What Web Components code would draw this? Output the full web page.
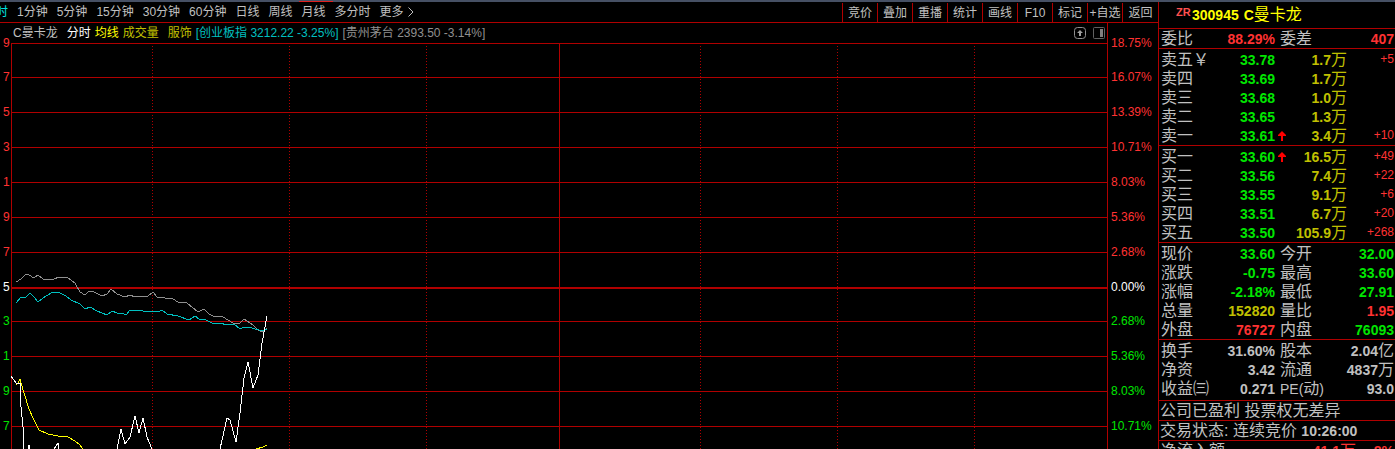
<!DOCTYPE html>
<html lang="zh-CN">
<head>
<meta charset="utf-8">
<title>C曼卡龙 300945 分时</title>
<style>
html, body { margin: 0; height: 100%; }
body {
  background: #000; color: #c0c0c0; overflow: hidden;
  font: 12px/20px "Liberation Sans", "Noto Sans CJK SC", sans-serif;
  --line: #b00000; --up: #ff3232; --down: #00e600; --volume: #c0c000; --text: #c0c0c0;
}
</style>
</head>
<body>
<stock-terminal>
  <menu-bar slot="bar">
    <menu-item active>时</menu-item>
    <menu-item>1分钟</menu-item><menu-item>5分钟</menu-item><menu-item>15分钟</menu-item>
    <menu-item>30分钟</menu-item><menu-item>60分钟</menu-item><menu-item>日线</menu-item>
    <menu-item>周线</menu-item><menu-item>月线</menu-item><menu-item>多分时</menu-item>
    <menu-item more>更多</menu-item>
    <tool-button slot="tools">竞价</tool-button><tool-button slot="tools">叠加</tool-button>
    <tool-button slot="tools">重播</tool-button><tool-button slot="tools">统计</tool-button>
    <tool-button slot="tools">画线</tool-button><tool-button slot="tools">F10</tool-button>
    <tool-button slot="tools">标记</tool-button><tool-button slot="tools">+自选</tool-button>
    <tool-button slot="tools">返回</tool-button>
  </menu-bar>
  <price-axis slot="left" labels="9 7 5 3 1 9 7 5 3 1 9 7" align="right"></price-axis>
  <chart-legend slot="legend"></chart-legend>
  <intraday-chart slot="chart"></intraday-chart>
  <price-axis slot="right" framed labels="18.75% 16.07% 13.39% 10.71% 8.03% 5.36% 2.68% 0.00% 2.68% 5.36% 8.03% 10.71%"></price-axis>
  <quote-panel slot="quote">
    <quote-title mark="ZR" code="300945"><b>C</b>曼卡龙</quote-title>
    <quote-stats rows="委比|88.29%|up|委差|407|up"></quote-stats>
    <order-book rows="卖五￥|33.78||1.7|+5;卖四|33.69||1.7|;卖三|33.68||1.0|;卖二|33.65||1.3|;卖一|33.61|y|3.4|+10"></order-book>
    <order-book rows="买一|33.60|y|16.5|+49;买二|33.56||7.4|+22;买三|33.55||9.1|+6;买四|33.51||6.7|+20;买五|33.50||105.9|+268"></order-book>
    <quote-stats spaced rows="现价|33.60|down|今开|32.00|down;涨跌|-0.75|down|最高|33.60|down;涨幅|-2.18%|down|最低|27.91|down;总量|152820|volume|量比|1.95|up;外盘|76727|up|内盘|76093|down"></quote-stats>
    <quote-stats spaced loose rows="换手|31.60%|text|股本|2.04亿|text;净资|3.42|text|流通|4837万|text;收益㈢|0.271|text|PE(动)|93.0|text"></quote-stats>
    <quote-note>公司已盈利 投票权无差异</quote-note>
    <quote-note>交易状态: 连续竞价 <b>10:26:00</b></quote-note>
    <quote-flow></quote-flow>
  </quote-panel>
</stock-terminal>

<script>
function define(name, css, html) {
  customElements.define(name, class extends HTMLElement {
    constructor() {
      super();
      this.attachShadow({ mode: "open" }).innerHTML =
        `<style>:host,*{box-sizing:border-box}${css}</style>` +
        (typeof html === "function" ? html(this) : html);
    }
  });
}

// Numbers and latin letters are bold; CJK units and names are not.
const boldLatin = s => s.replace(/[-\d.%A-Z()]+/g, "<b>$&</b>");

define("stock-terminal", `
  :host { display: grid; grid-template: 2px minmax(0,1fr) / minmax(0,1fr) 237px; height: 100vh; overflow: hidden; }
  .frame { grid-column: 1 / 3; background: #465064; display: flex; align-items: flex-end; padding-left: 299px; }
  .frame i { width: 34px; height: 1px; background: #e02020; }
  .work { display: flex; flex-direction: column; min-width: 0; }
  .plot { flex: 1; min-height: 0; display: grid; grid-template-columns: 11px minmax(0,1fr) 51px; }
  .middle { min-width: 0; overflow: hidden; }
`, `
  <div class="frame"><i></i></div>
  <main class="work">
    <slot name="bar"></slot>
    <div class="plot">
      <slot name="left"></slot>
      <div class="middle"><slot name="legend"></slot><slot name="chart"></slot></div>
      <slot name="right"></slot>
    </div>
  </main>
  <slot name="quote"></slot>
`);

define("menu-bar", `
  :host { display: flex; justify-content: space-between; height: 21px; border-bottom: 1px solid var(--line); }
  nav { display: flex; gap: 9px; overflow: hidden; padding-left: 8px; }
  .tools { display: grid; grid-template-columns: repeat(8, 35px) 36px; padding-top: 1px; }
`, `<nav><slot></slot></nav><div class="tools"><slot name="tools"></slot></div>`);

const bareButton = `button { all: unset; box-sizing: border-box; font: inherit; color: inherit; white-space: nowrap; cursor: pointer; }`;

define("menu-item", `
  :host { display: block; line-height: 20px; }
  :host([active]) { color: #00e0e0; width: 0; display: flex; justify-content: flex-end; }
  ${bareButton}
  button { display: flex; align-items: center; gap: 4px; }
`, el => `<button type="button"><slot></slot>${el.hasAttribute("more")
  ? '<svg width="6" height="10" viewBox="0 0 6 10" fill="none" stroke="#c0c0c0"><path d="M.5 .5 5 5 .5 9.5"/></svg>' : ""}</button>`);

define("tool-button", `
  :host { display: block; border-left: 1px solid var(--line); }
  ${bareButton}
  button { display: block; width: 100%; text-align: center; line-height: 20px; }
`, `<button type="button"><slot></slot></button>`);

define("chart-legend", `
  :host { display: flex; align-items: center; gap: 4px; height: 20px; padding: 0 2px; white-space: nowrap; }
  .apart { margin-left: 5px; }
  .icons { margin-left: auto; display: flex; gap: 7px; }
  ${bareButton}
  button, svg { display: block; }
`, `
  <span>C曼卡龙</span>
  <span class="apart" style="color:#fff">分时</span>
  <span style="color:#ff0">均线</span>
  <span style="color:#c0c000">成交量</span>
  <span class="apart" style="color:#c0c000">服饰</span>
  <span style="color:#00c0c0">[创业板指 3212.22 -3.25%]</span>
  <span style="color:#909090">[贵州茅台 2393.50 -3.14%]</span>
  <span class="icons">
    <button type="button" aria-label="上移"><svg width="12" height="12" viewBox="0 0 12 12"><rect x=".5" y=".5" width="11" height="11" rx="3" fill="none" stroke="#909090"/><path d="M6 3 9 6H7V9H5V6H3Z" fill="#a0a0a0"/></svg></button>
    <button type="button" aria-label="侧栏"><svg width="12" height="12" viewBox="0 0 12 12"><rect x=".5" y=".5" width="11" height="11" rx="1" fill="none" stroke="#606060"/><path d="M7 2h3v8H7Z" fill="#808080"/></svg></button>
  </span>
`);

define("price-axis", `
  :host { display: block; min-height: 0; overflow: hidden; padding-top: 3px; }
  :host([framed]) { border-left: 1px solid var(--line); }
  ol { list-style: none; margin: 0; padding: 0 3px; display: grid; align-items: center;
       grid-template-rows: 34px 34px repeat(6, 35px) 34px repeat(3, 35px); }
  :host([align=right]) ol { text-align: right; }
`, el => `<ol>${el.getAttribute("labels").split(" ").map((t, i) =>
  `<li style="color:${i < 7 ? "var(--up)" : i > 7 ? "var(--down)" : "#fff"}">${t}</li>`).join("")}</ol>`);

const series = [
  ["#909090", "5,239 10,236 15,231 18,232 23,235 27,232 32,236 43,236 48,234 56,234 64,240 69,249 74,252 77,249 81,248 91,253 96,251 100,246 106,251 114,254 119,252 124,254 128,253 137,253 142,249 146,254 154,255 162,256 167,259 176,260 187,269 193,266 198,271 202,273 212,274 222,280 228,281 233,276 242,282 247,287 252,289 256,285"],
  ["#00c0c0", "5,260 10,254 15,254 19,250 23,254 27,259 32,255 42,249 49,250 55,253 60,257 69,261 74,266 79,264 86,268 96,272 101,268 106,270 111,270 115,272 119,267 124,268 128,267 132,268 147,269 151,267 156,271 167,273 178,277 184,273 188,276 193,276 201,280 209,280 216,282 223,281 229,286 233,284 241,285 251,288 256,286"],
  ["#ffff00", "5,342 7,340 9,336 13,350 18,366 23,377 28,387 37,391 47,393 57,394 64,398 69,402 72,406"],
  ["#ffff00", "245,406 252,404 256,402"],
  ["#ffffff", "0,333 5,340 9,340 10,364 12,384 13,406"],
  ["#ffffff", "17,406 18,402 19,406"],
  ["#ffffff", "43,406 47,400 48,406"],
  ["#ffffff", "106,406 110,386 114,401 119,394 124,373 128,390 132,375 136,394 141,406"],
  ["#ffffff", "209,406 216,375 219,377 225,399 229,370 233,335 237,319 242,345 247,332 251,300 254,284 256,273"],
];
define("intraday-chart", `
  :host { display: block; }
  svg { display: block; width: 100%; height: 406px; shape-rendering: crispEdges; }
  path, polyline { fill: none; vector-effect: non-scaling-stroke; }
  .grid { stroke: #b00000; }
`, () => {
  const rows = [0, 34, 69, 104, 139, 174, 209, 278, 313, 348, 383].map(y => `M0 ${y}.5H1096`).join("");
  const dots = [141, 278, 415, 689, 826, 963].map(x => `M${x}.5 3V406`).join("");
  return `<svg viewBox="0 0 1096 406" preserveAspectRatio="none" role="img" aria-label="分时走势">
    <path class="grid" d="${rows}M.5 0V406M548.5 0V406"/>
    <path class="grid" stroke-dasharray="1 2" d="${dots}"/>
    <path class="grid" stroke-width="2" d="M0 245H1096"/>
    ${series.map(([c, p]) => `<polyline stroke="${c}" points="${p}"/>`).join("")}
  </svg>`;
});

define("quote-panel", `
  :host { display: block; min-height: 0; overflow: hidden; border-left: 1px solid var(--line); font-size: 16px; line-height: 19px; }
`, `<slot></slot>`);

define("quote-title", `
  :host { display: block; height: 27px; border-bottom: 1px solid var(--line); color: #ff0; }
  h1 { margin: 0; padding-left: 17px; display: flex; font: inherit; line-height: 26px; white-space: nowrap; }
  sup { font-size: 11px; font-weight: bold; line-height: 20px; color: #ff5050; width: 16px; }
  b, ::slotted(b) { font-size: 14px; }
  b { margin-right: 5px; }
`, el => `<h1><sup>${el.getAttribute("mark")}</sup><b>${el.getAttribute("code")}</b><span><slot></slot></span></h1>`);

const tableCss = `
  :host { display: block; border-bottom: 1px solid var(--line); padding: 0 1px 0 2px; }
  table, tbody { display: block; }
  tr { display: grid; height: 19px; }
  th { text-align: left; font-weight: inherit; white-space: nowrap; padding: 0; }
  td { text-align: right; white-space: nowrap; padding: 0; }
  b { font-size: 14px; }
  th b { font-weight: normal; }
`;

define("quote-stats", tableCss + `
  :host([spaced]) { padding-top: 1px; }
  :host([loose]) { padding-bottom: 2px; }
  tr { grid-template-columns: 50px 69px 50px minmax(0,1fr); }
  .first { padding-right: 5px; }
  .text { color: var(--text); } .up { color: var(--up); } .down { color: var(--down); } .volume { color: var(--volume); }
`, el => `<table>${el.getAttribute("rows").split(";").map(r => {
  const [a, av, ac, b, bv, bc] = r.split("|");
  return `<tr><th scope="row">${a}</th><td class="first ${ac}">${boldLatin(av)}</td><th scope="row">${boldLatin(b)}</th><td class="${bc}">${boldLatin(bv)}</td></tr>`;
}).join("")}</table>`);

define("order-book", tableCss + `
  :host { padding-top: 1px; }
  tr { grid-template-columns: 50px 64px 13px 59px minmax(0,1fr); }
  .price { color: var(--down); }
  .arrow { display: flex; align-items: center; justify-content: center; }
  .volume { color: var(--volume); }
  .delta { color: var(--up); font-size: 12px; }
`, el => `<table>${el.getAttribute("rows").split(";").map(r => {
  const [n, p, arrow, v, d] = r.split("|");
  return `<tr><th scope="row">${n}</th><td class="price"><b>${p}</b></td><td class="arrow">${arrow
    ? '<svg width="8" height="10" viewBox="0 0 8 10"><path d="M4 0 8 4V5H5V10H3V5H0V4Z" fill="#f00"/></svg>' : ""
    }</td><td class="volume"><b>${v}</b>万</td><td class="delta">${d}</td></tr>`;
}).join("")}</table>`);

define("quote-note", `
  :host { display: block; height: 20px; padding-left: 1px; border-bottom: 1px solid var(--line); white-space: nowrap; }
  ::slotted(b) { font-size: 14px; }
`, `<slot></slot>`);

define("quote-flow", tableCss + `
  :host { border: 0; }
  tr { grid-template-columns: 70px 125px minmax(0,1fr); }
  td { color: var(--up); }
`, `<table><tr><th scope="row">净流入额</th><td><b>41.1</b>万</td><td><b>8%</b></td></tr></table>`);
</script>
</body>
</html>
